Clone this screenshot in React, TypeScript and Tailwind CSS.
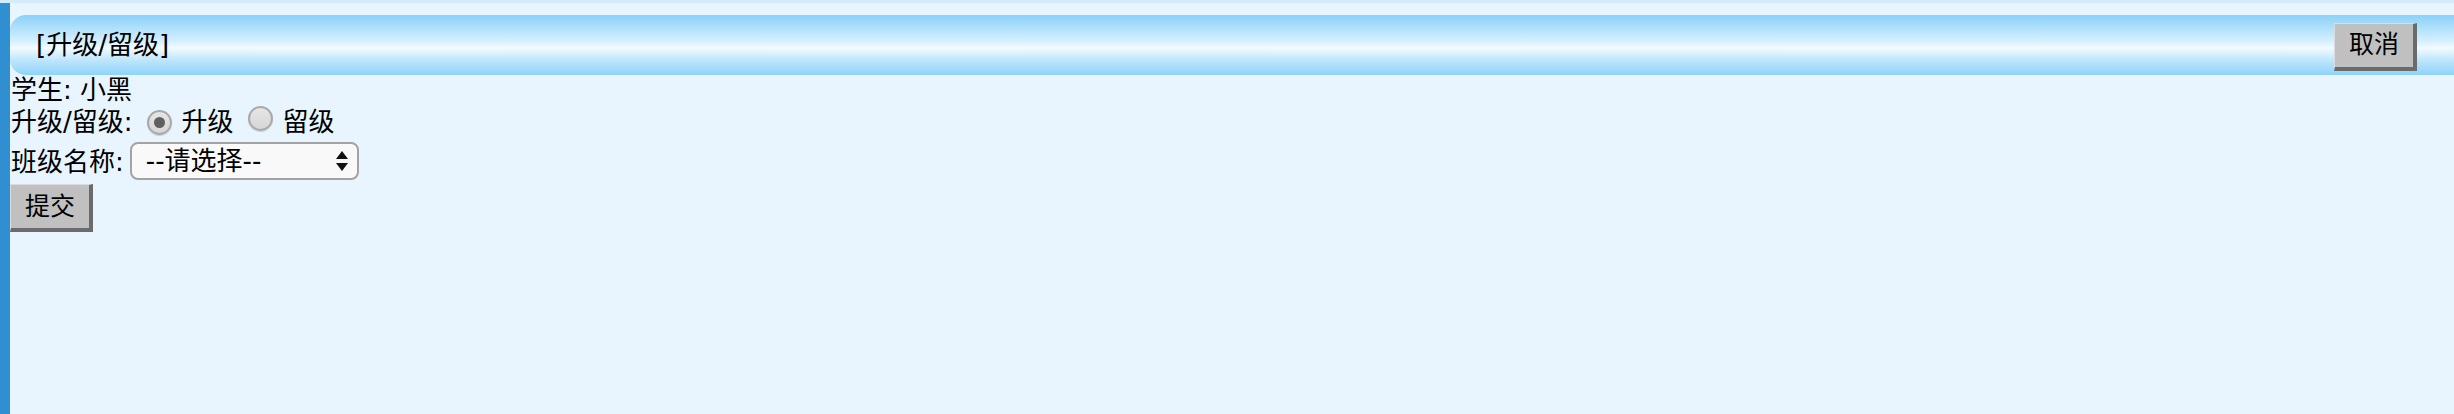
import React from "react";

const font = { fontFamily: '"DejaVu Sans", "Noto Sans CJK SC", sans-serif' };

function Radio({ checked }: { checked?: boolean }) {
  return (
    <span className="inline-flex h-[25px] w-[25px] items-center justify-center rounded-full border-[2px] border-[#a9a9a9] bg-[linear-gradient(#e6e6e6,#d6d6d6)] shadow-[0_1px_1px_rgba(0,0,0,0.15)]">
      {checked && <span className="h-[11px] w-[11px] rounded-full bg-[#5f5f5f]" />}
    </span>
  );
}

function OldButton({ children }: { children: React.ReactNode }) {
  return (
    <div className="flex h-[48px] w-[83px] items-center justify-center border-t border-l border-t-[#dcdcdc] border-l-[#dcdcdc] border-r-[4px] border-b-[4px] border-r-[#6b6b6b] border-b-[#6b6b6b] bg-[#c0c0c0] text-[25px] text-black">
      {children}
    </div>
  );
}

export default function App() {
  return (
    <div className="flex h-[414px] w-[2454px] flex-col bg-[#e8f5fe] text-black" style={font}>
      <div className="h-[3px] bg-[#d4ebfa]" />
      <div className="flex flex-1">
        <div className="w-[10px] bg-[#2f8fd1]" />
        <div className="flex flex-1 flex-col pt-[12px]">
          <div className="flex h-[60px] items-center justify-between rounded-l-[16px] bg-[linear-gradient(#8ad1f8_0%,#d8f1ff_45%,#f2fbff_55%,#bfe6fc_75%,#8dd3fa_100%)] pl-[26px] pr-[37px]">
            <span className="text-[26px] leading-none">[升级/留级]</span>
            <div className="mt-[3px]">
              <OldButton>取消</OldButton>
            </div>
          </div>
          <div className="flex h-[29px] items-center pl-[1px] text-[26px] leading-none">学生: 小黑</div>
          <div className="flex h-[36px] items-center pl-[1px] text-[26px] leading-none">
            <span>升级/留级:</span>
            <span className="ml-[14px] mt-[-3px]"><Radio checked /></span>
            <span className="ml-[10px]">升级</span>
            <span className="ml-[14px] mt-[-3px]"><Radio /></span>
            <span className="ml-[10px]">留级</span>
          </div>
          <div className="flex h-[44px] items-center pl-[1px] text-[26px] leading-none">
            <span>班级名称:</span>
            <div className="ml-[6px] mt-[-2px] flex h-[38px] w-[229px] items-center justify-between rounded-[8px] border-[2px] border-[#a3a3a3] bg-[#f9f9f9] pl-[14px] pr-[9px]">
              <span>--请选择--</span>
              <svg width="12" height="20" viewBox="0 0 12 20">
                <polygon points="6,0 12,8 0,8" fill="#111" />
                <polygon points="0,12 12,12 6,20" fill="#111" />
              </svg>
            </div>
          </div>
          <div className="flex">
            <OldButton>提交</OldButton>
          </div>
        </div>
      </div>
    </div>
  );
}
